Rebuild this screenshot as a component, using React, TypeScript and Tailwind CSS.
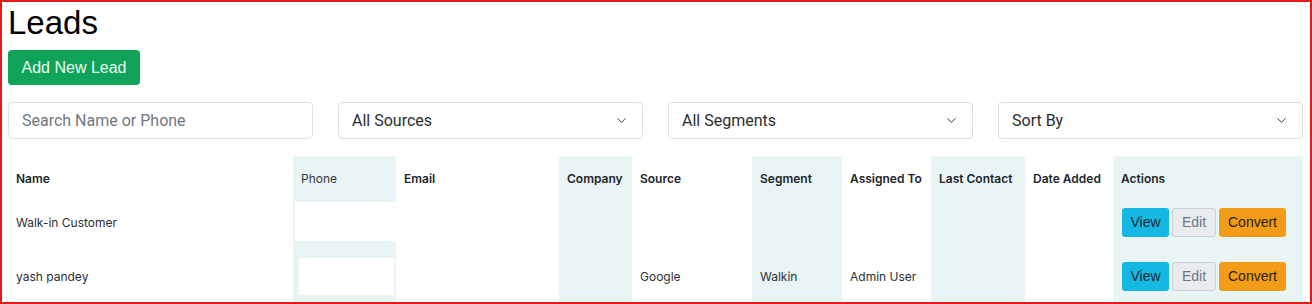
import { ChevronDown } from "lucide-react";

type Lead = {
  name: string;
  phone: string;
  email: string;
  company: string;
  source: string;
  segment: string;
  assignedTo: string;
  lastContact: string;
  dateAdded: string;
};

const leads: Lead[] = [
  {
    name: "Walk-in Customer",
    phone: "",
    email: "",
    company: "",
    source: "",
    segment: "",
    assignedTo: "",
    lastContact: "",
    dateAdded: "",
  },
  {
    name: "yash pandey",
    phone: "",
    email: "",
    company: "",
    source: "Google",
    segment: "Walkin",
    assignedTo: "Admin User",
    lastContact: "",
    dateAdded: "",
  },
];

function SelectBox({ label }: { label: string }) {
  return (
    <div className="flex h-[37px] items-center justify-between rounded border border-[#dcdfe3] bg-white pl-[13px] pr-[13px] text-[16px] text-[#2a2d31] font-['Roboto',sans-serif]">
      <span>{label}</span>
      <ChevronDown size={15} strokeWidth={1.6} className="text-[#3a3d42]" />
    </div>
  );
}

function App() {
  const shaded = "bg-[#e9f4f5]";
  const thBase = "h-[46px] px-2 text-left align-middle text-[12px]";
  const th = `${thBase} font-semibold text-[#212529]`;
  const td = "px-2 align-middle text-[12px] text-[#2b2f33]";

  return (
    <div className="h-[304px] w-[1312px] overflow-hidden border-2 border-[#e3191c] bg-white font-['Liberation_Sans',Arial,sans-serif]">
      <div className="pl-[6px] pr-[7px] pt-[1px]">
        <h1 className="h-[40px] text-[33px] leading-[40px] text-black">Leads</h1>
        <button className="mt-[7px] h-[35px] w-[132px] rounded bg-[#10a35a] text-[16px] text-[#e8fff2]">
          Add New Lead
        </button>

        <div className="mt-[17px] grid grid-cols-4 gap-[25px]">
          <div className="flex h-[37px] items-center rounded border border-[#dcdfe3] bg-white px-[13px] text-[16px] text-[#707780] font-['Roboto',sans-serif]">
            Search Name or Phone
          </div>
          <SelectBox label="All Sources" />
          <SelectBox label="All Segments" />
          <SelectBox label="Sort By" />
        </div>

        <table className="mt-[17px] w-[1295px] table-fixed border-collapse font-['Inter',sans-serif]">
          <colgroup>
            <col className="w-[285px]" />
            <col className="w-[103px]" />
            <col className="w-[163px]" />
            <col className="w-[73px]" />
            <col className="w-[120px]" />
            <col className="w-[90px]" />
            <col className="w-[89px]" />
            <col className="w-[94px]" />
            <col className="w-[88px]" />
            <col className="w-[190px]" />
          </colgroup>
          <thead>
            <tr>
              <th className={th}>Name</th>
              <th className={`${thBase} ${shaded} font-normal text-[#33373b]`}>Phone</th>
              <th className={th}>Email</th>
              <th className={`${th} ${shaded}`}>Company</th>
              <th className={th}>Source</th>
              <th className={`${th} ${shaded}`}>Segment</th>
              <th className={th}>Assigned To</th>
              <th className={`${th} ${shaded}`}>Last Contact</th>
              <th className={th}>Date Added</th>
              <th className={`${th} ${shaded}`}>Actions</th>
            </tr>
          </thead>
          <tbody>
            {leads.map((lead, i) => (
              <tr key={lead.name} className={i === 0 ? "h-[41px]" : "h-[67px]"}>
                <td className={td}>{lead.name}</td>
                <td className={`${shaded} p-0 align-top`}>
                  <div
                    className={
                      i === 0
                        ? "ml-[2px] h-[39px] bg-white"
                        : "ml-[6px] mr-[2px] mt-[15px] h-[37px] bg-white"
                    }
                  />
                </td>
                <td className={td}>{lead.email}</td>
                <td className={`${td} ${shaded}`}>{lead.company}</td>
                <td className={td}>{lead.source}</td>
                <td className={`${td} ${shaded}`}>{lead.segment}</td>
                <td className={td}>{lead.assignedTo}</td>
                <td className={`${td} ${shaded}`}>{lead.lastContact}</td>
                <td className={td}>{lead.dateAdded}</td>
                <td className={`${shaded} pl-[9px] align-middle`}>
                  <div className="flex gap-[3px] font-['Liberation_Sans',Arial,sans-serif] text-[14px]">
                    <button className="h-[29px] w-[47px] rounded-[3px] bg-[#14b8e2] text-[#1b2733]">
                      View
                    </button>
                    <button className="h-[29px] w-[44px] rounded-[3px] border border-[#c9cfd5] bg-[#e9ecef] text-[#6f777f]">
                      Edit
                    </button>
                    <button className="h-[29px] w-[67px] rounded-[3px] bg-[#f39c17] text-[#2a1d0c]">
                      Convert
                    </button>
                  </div>
                </td>
              </tr>
            ))}
          </tbody>
        </table>
      </div>
    </div>
  );
}

export default App;
